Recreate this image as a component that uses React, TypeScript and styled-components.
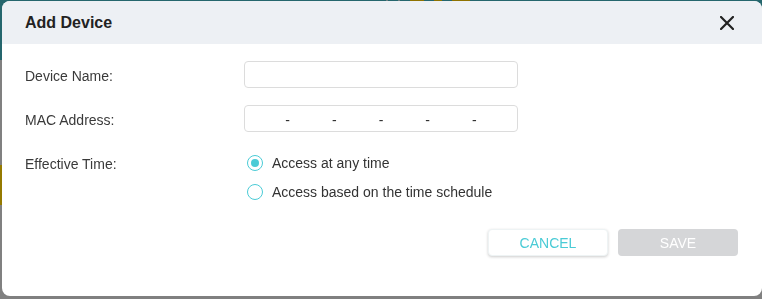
import styled, { createGlobalStyle } from 'styled-components';

const GlobalStyle = createGlobalStyle`
  html, body {
    margin: 0;
    padding: 0;
    background: #808080;
    font-family: "Liberation Sans", Arial, sans-serif;
  }
`;

const Page = styled.div`
  width: 762px;
  height: 299px;
  overflow: hidden;
  background: #808080;
`;

const TopBar = styled.div`
  height: 60px;
  background: #25666d;
  display: flex;
  align-items: flex-start;
  padding-left: 386px;
  gap: 10px;
`;

const Spot = styled.span<{ $w: number; $gold?: boolean }>`
  width: ${p => p.$w}px;
  height: 4px;
  background: ${p => (p.$gold ? '#8f7200' : '#6f7e80')};
`;

const SideBlock = styled.div`
  width: 40px;
  height: 40px;
  margin-top: 105px;
  background: #957a00;
`;

const Dialog = styled.div`
  position: fixed;
  top: 1px;
  left: 2px;
  width: 760px;
  height: 295px;
  background: #fff;
  border-radius: 8px;
  overflow: hidden;
  display: flex;
  flex-direction: column;
`;

const Header = styled.div`
  height: 43px;
  background: #edf0f4;
  display: flex;
  align-items: center;
  justify-content: space-between;
  padding: 0 27px 0 23px;
`;

const Title = styled.h2`
  margin: 0;
  font-size: 16px;
  font-weight: bold;
  color: #222;
`;

const CloseButton = styled.button`
  border: 0;
  background: none;
  padding: 0;
  width: 16px;
  height: 16px;
  display: flex;
  align-items: center;
  justify-content: center;
  cursor: pointer;
`;

const Body = styled.div`
  padding: 17px 22px 0 23px;
  display: grid;
  grid-template-columns: 219px 274px;
  row-gap: 17px;
  align-items: center;
`;

const Label = styled.label<{ $top?: number }>`
  font-size: 14px;
  color: #3a3a3a;
  align-self: start;
  line-height: 20px;
  padding-top: ${p => p.$top ?? 5}px;
`;

const TextInput = styled.input`
  box-sizing: border-box;
  width: 274px;
  height: 27px;
  border: 1px solid #dcdcdc;
  border-radius: 4px;
  outline: none;
  padding: 0 10px;
  font-size: 14px;
  font-family: inherit;
`;

const MacBox = styled.div`
  box-sizing: border-box;
  width: 274px;
  height: 27px;
  border: 1px solid #dcdcdc;
  border-radius: 4px;
  display: flex;
  align-items: center;
`;

const MacPart = styled.input`
  flex: 1;
  min-width: 0;
  border: 0;
  outline: none;
  background: none;
  text-align: center;
  font-size: 14px;
  font-family: inherit;
`;

const Dash = styled.span`
  font-size: 14px;
  color: #333;
  width: 8px;
  text-align: center;
  padding-top: 3px;
`;

const RadioGroup = styled.div`
  display: flex;
  flex-direction: column;
  gap: 9px;
  padding-top: 4px;
`;

const RadioRow = styled.label`
  display: flex;
  align-items: center;
  gap: 9px;
  height: 20px;
  font-size: 14px;
  color: #333;
  cursor: pointer;
`;

const RadioCircle = styled.span<{ $checked?: boolean }>`
  box-sizing: border-box;
  width: 16px;
  height: 16px;
  margin-left: 3px;
  border: 1.5px solid #4acbd6;
  border-radius: 50%;
  display: flex;
  align-items: center;
  justify-content: center;

  &::after {
    content: '';
    width: 8px;
    height: 8px;
    border-radius: 50%;
    background: ${p => (p.$checked ? '#4acbd6' : 'transparent')};
  }
`;

const Footer = styled.div`
  display: flex;
  justify-content: flex-end;
  gap: 10px;
  padding: 27px 24px 0 0;
`;

const Button = styled.button<{ $primary?: boolean }>`
  width: 120px;
  height: 27px;
  border-radius: 4px;
  font-size: 14px;
  font-family: inherit;
  border: ${p => (p.$primary ? '0' : '1px solid #eef3f4')};
  background: ${p => (p.$primary ? '#d5d6d8' : '#fff')};
  color: ${p => (p.$primary ? '#fff' : '#4acbd6')};
  box-shadow: ${p => (p.$primary ? 'none' : '0 1px 3px rgba(0, 0, 0, 0.2)')};
  cursor: pointer;
`;

export default function App() {
  return (
    <>
      <GlobalStyle />
      <Page>
        <TopBar>
          <Spot $w={2} />
          <Spot $w={2} />
          <Spot $w={14} $gold />
          <Spot $w={8} $gold />
          <Spot $w={18} $gold />
        </TopBar>
        <SideBlock />
      </Page>
      <Dialog>
        <Header>
          <Title>Add Device</Title>
          <CloseButton aria-label="close">
            <svg width="14" height="14" viewBox="0 0 14 14">
              <path d="M1 1 L13 13 M13 1 L1 13" stroke="#222" strokeWidth="2.2" strokeLinecap="square" />
            </svg>
          </CloseButton>
        </Header>
        <Body>
          <Label>Device Name:</Label>
          <TextInput />
          <Label>MAC Address:</Label>
          <MacBox>
            <MacPart />
            <Dash>-</Dash>
            <MacPart />
            <Dash>-</Dash>
            <MacPart />
            <Dash>-</Dash>
            <MacPart />
            <Dash>-</Dash>
            <MacPart />
            <Dash>-</Dash>
            <MacPart />
          </MacBox>
          <Label $top={5}>Effective Time:</Label>
          <RadioGroup>
            <RadioRow>
              <RadioCircle $checked />
              Access at any time
            </RadioRow>
            <RadioRow>
              <RadioCircle />
              Access based on the time schedule
            </RadioRow>
          </RadioGroup>
        </Body>
        <Footer>
          <Button>CANCEL</Button>
          <Button $primary>SAVE</Button>
        </Footer>
      </Dialog>
    </>
  );
}
